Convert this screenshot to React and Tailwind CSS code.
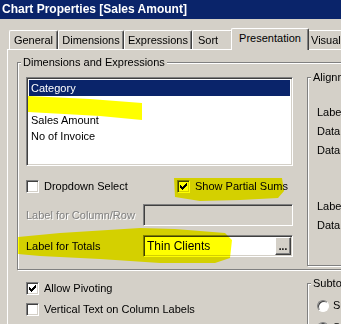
const sunken =
  'border border-t-[#808080] border-l-[#808080] border-b-white border-r-white shadow-[inset_1px_1px_0_#404040,inset_-1px_-1px_0_#d4d0c8]';
const etched = 'border border-[#808080] shadow-[inset_1px_1px_0_#fff,1px_1px_0_#fff]';
const raised =
  'border border-t-white border-l-white border-b-[#404040] border-r-[#404040] shadow-[inset_-1px_-1px_0_#808080] bg-[#d4d0c8]';

const tabs = [
  { label: 'General', width: 'w-[49px] justify-center' },
  { label: 'Dimensions', width: 'w-[66px] justify-center' },
  { label: 'Expressions', width: 'w-[68px] justify-center' },
  { label: 'Sort', width: 'w-[41px] pl-[5px]' },
  { label: 'Presentation', width: 'w-[78px] justify-center', active: true },
  { label: 'Visual Cues', width: 'w-[62px] pl-[3px]' },
];

const listItems = ['Category', '', 'Sales Amount', 'No of Invoice'];

function CheckBox({ checked }) {
  return (
    <span className={`flex h-[13px] w-[13px] shrink-0 items-center justify-center bg-white ${sunken}`}>
      {checked ? (
        <svg width="7" height="7" viewBox="0 0 7 7" className="block">
          <path d="M0 2h1v1h1v1h1V3h1V2h1V1h1V0h1v3H6v1H5v1H4v1H3v1H2V6H1V5H0z" fill="#000" />
        </svg>
      ) : null}
    </span>
  );
}

function Radio() {
  return (
    <span className="block h-[12px] w-[12px] shrink-0 rounded-full border border-t-[#808080] border-l-[#808080] border-b-white border-r-white bg-white shadow-[inset_1px_1px_0_#404040]" />
  );
}

function GroupBox({ title, className, children }) {
  return (
    <div className={`relative ${etched} ${className}`}>
      <span className="absolute -top-[7px] left-[3px] bg-[#d4d0c8] px-[2px] leading-[13px] whitespace-nowrap">{title}</span>
      {children}
    </div>
  );
}

export default function App() {
  return (
    <div className="relative h-[324px] w-[341px] overflow-hidden bg-[#d4d0c8] font-['Liberation_Sans',Arial,sans-serif] text-[11px] leading-[13px] text-black">
      <div className="flex h-[19px] items-center bg-[#0a246a] pl-[2px] text-[12px] font-bold text-white whitespace-nowrap">
        Chart Properties [Sales Amount]
      </div>

      <div className="flex h-[30px] items-end pl-[9px] whitespace-nowrap">
        {tabs.map((tab) => (
          <div
            key={tab.label}
            className={`flex shrink-0 items-center rounded-t-[2px] border-t border-l border-r border-t-white border-l-white border-r-[#404040] bg-[#d4d0c8] shadow-[inset_-1px_0_0_#808080] ${tab.width} ${
              tab.active ? 'relative z-10 -mx-[2px] -mb-[1px] h-[22px] pb-[2px]' : 'h-[19px] pt-[1px]'
            }`}
          >
            {tab.label}
          </div>
        ))}
      </div>

      <div className="ml-[7px] h-[275px] border-t border-l border-white pl-[9px]">
        <GroupBox title="Dimensions and Expressions" className="mt-[12px] h-[208px] w-[340px]">
          <div className="flex pt-[14px] pl-[8px]">
            <div className="w-[267px] shrink-0">
              <div className={`h-[89px] bg-white ${sunken} p-[2px]`}>
                {listItems.map((item, index) => (
                  <div
                    key={index}
                    className={`h-[16px] pl-[2px] leading-[16px] ${index === 0 ? 'bg-[#0a246a] text-white' : ''}`}
                  >
                    {item}
                  </div>
                ))}
              </div>

              <div className="mt-[14px] flex h-[13px] items-center">
                <div className="flex w-[151px] items-center gap-[5px]">
                  <CheckBox />
                  <span>Dropdown Select</span>
                </div>
                <div className="flex items-center gap-[5px]">
                  <CheckBox checked />
                  <span>Show Partial Sums</span>
                </div>
              </div>

              <div className="mt-[11px] flex h-[22px] items-center">
                <span className="w-[117px] text-[#808080] [text-shadow:1px_1px_0_#fff]">Label for Column/Row</span>
                <div className={`h-[22px] w-[150px] ${sunken}`} />
              </div>

              <div className="mt-[9px] flex h-[22px] items-center">
                <span className="w-[117px]">Label for Totals</span>
                <div className={`flex h-[22px] w-[150px] items-center justify-between bg-white ${sunken} pl-[3px] pr-[1px]`}>
                  <span className="text-[12px]">Thin Clients</span>
                  <span className={`flex h-[18px] w-[16px] items-end justify-center pb-[3px] text-[10px] leading-[8px] font-bold ${raised}`}>
                    ...
                  </span>
                </div>
              </div>
            </div>

            <GroupBox title="Alignment" className="ml-[14px] h-[189px] w-[60px] shrink-0">
              <div className="pt-[25px] pl-[9px] leading-[19px] whitespace-nowrap">
                <div>Label (Left)</div>
                <div>Data (Right)</div>
                <div>Data (Right)</div>
                <div className="mt-[37px]">Label (Top)</div>
                <div>Data (Center)</div>
              </div>
            </GroupBox>
          </div>
        </GroupBox>

        <div className="flex">
          <div className="w-[290px] shrink-0 pt-[12px] pl-[9px]">
            <div className="flex h-[13px] items-center gap-[5px]">
              <CheckBox checked />
              <span>Allow Pivoting</span>
            </div>
            <div className="mt-[8px] flex h-[13px] items-center gap-[5px]">
              <CheckBox />
              <span>Vertical Text on Column Labels</span>
            </div>
          </div>
          <GroupBox title="Subtotals" className="mt-[13px] h-[80px] w-[80px] shrink-0">
            <div className="pt-[15px] pl-[9px] whitespace-nowrap">
              <div className="flex items-center gap-[4px]">
                <Radio />
                <span>Subtotals on Top</span>
              </div>
              <div className="mt-[9px] flex items-center gap-[4px]">
                <Radio />
                <span>Subtotals on Bottom</span>
              </div>
            </div>
          </GroupBox>
        </div>
      </div>

      <svg
        className="pointer-events-none absolute top-0 left-0 mix-blend-multiply"
        width="341"
        height="324"
        viewBox="0 0 341 324"
      >
        <polygon points="28,96 90,99 142,103 142,120 100,116 28,112" fill="#ffff00" />
        <polygon points="174,178 282,178 284,191 278,198 240,200 200,201 175,197" fill="#ffff00" />
        <polygon
          points="18,237 60,233 140,228 175,229 225,233 232,240 230,258 215,263 160,263 100,259 40,256 18,254"
          fill="#ffff00"
        />
      </svg>
    </div>
  );
}
